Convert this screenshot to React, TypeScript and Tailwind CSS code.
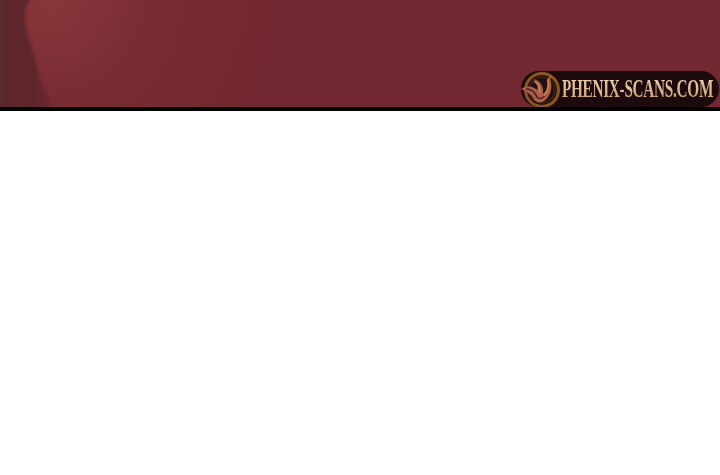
export default function App() {
  return (
    <div className="w-[720px] h-[475px] bg-white overflow-hidden">
      <div className="relative h-[111px] bg-[#722830] border-b-[4px] border-black flex items-end justify-end overflow-hidden">
        <svg className="absolute inset-0" width="720" height="107" viewBox="0 0 720 107" aria-hidden="true">
          <defs>
            <radialGradient id="glow" gradientUnits="userSpaceOnUse" cx="50" cy="0" r="230">
              <stop offset="0" stopColor="#88363c" />
              <stop offset="0.45" stopColor="#7a2b32" />
              <stop offset="1" stopColor="#722830" />
            </radialGradient>
            <linearGradient id="dark" x1="0" y1="0" x2="1" y2="0">
              <stop offset="0" stopColor="#5c292d" />
              <stop offset="0.7" stopColor="#5f272c" />
              <stop offset="1" stopColor="#6c2830" />
            </linearGradient>
            <filter id="soft" x="-20%" y="-20%" width="140%" height="140%"><feGaussianBlur stdDeviation="1.5" /></filter>
          </defs>
          <rect width="300" height="107" fill="url(#glow)" />
          <path d="M-12 -8H33L26 8L25 20L27 32L30 42L33 52L36 62L38 72L42 84L48 96L54 115H-12Z" fill="url(#dark)" filter="url(#soft)" />
        </svg>
        <div className="relative mr-px h-[36px] w-[198px] rounded-full bg-[#1d0a0d] flex items-center justify-end pr-[6px]">
          <svg className="absolute left-[-1px] top-0" width="42" height="37" viewBox="0 0 42 37" aria-hidden="true">
            <circle cx="22" cy="19" r="16.5" fill="#241010" stroke="#8a5520" strokeWidth="3" />
            <circle cx="22" cy="19" r="13" fill="none" stroke="#4a2810" strokeWidth="1.2" />
            <path d="M1 18C7 14 13 15 17 19C19 14 16 11 14 8C20 10 24 15 23 23C27 20 28 14 27 8L32 4L30 9C33 15 31 25 24 30C20 33 15 31 13 27C11 23 7 21 1 18Z" fill="#a9604d" />
            <path d="M6 18C11 18 15 21 17 26C20 29 24 27 26 23" fill="none" stroke="#4e1a18" strokeWidth="1.6" />
            <path d="M14 10C18 13 20 17 20 22" fill="none" stroke="#cf8f52" strokeWidth="1.3" />
            <path d="M28 9C29 15 28 21 24 25" fill="none" stroke="#cc8640" strokeWidth="1.4" />
          </svg>
          <span className="block shrink-0 w-max origin-right whitespace-nowrap font-['Liberation_Serif',serif] font-bold text-[26px] leading-[30px] tracking-[-0.5px] scale-x-[0.588] bg-gradient-to-b from-[#f2d9b8] to-[#c99a6c] bg-clip-text text-transparent">
            PHENIX-SCANS.COM
          </span>
        </div>
      </div>
    </div>
  );
}
